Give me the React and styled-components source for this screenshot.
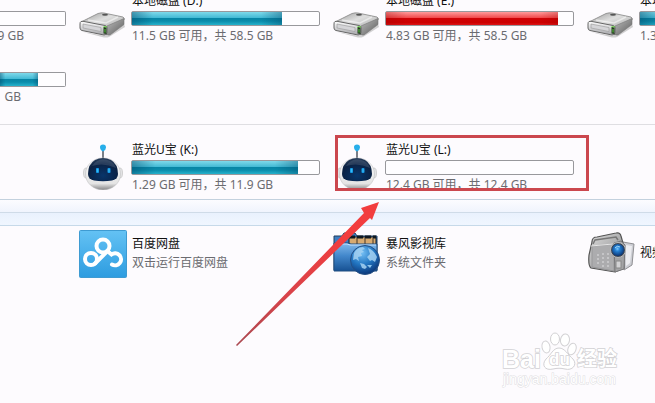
import React from "react";
import styled, { createGlobalStyle } from "styled-components";

const GlobalStyle = createGlobalStyle`
  * { box-sizing: border-box; }
  body {
    margin: 0;
    background: #fdfbfe;
    font-family: "Noto Sans", "Noto Sans CJK SC", sans-serif;
    font-size: 12px;
    line-height: 18px;
    color: #101010;
  }
`;

const Page = styled.main`
  position: relative;
  min-height: 100vh;
  overflow: hidden;
`;

const TileGrid = styled.section`
  display: grid;
  grid-template-columns: 79px 254px 254px minmax(0, 1fr);
  grid-auto-rows: 51px;
  row-gap: 10px;
`;

const DriveGrid = styled(TileGrid)`
  margin-top: -7px;
  padding-bottom: 19px;
`;

const RemovableGrid = styled(TileGrid)`
  padding: 17px 0 6px;
  border-top: 1px solid #dfdee2;
`;

const FolderGrid = styled(TileGrid)`
  padding-top: 2px;
`;

const Divider = styled.div`
  height: 14px;
  border-top: 1px solid #c3d1de;
  border-bottom: 1px solid #cfdbe8;
  background: linear-gradient(#fcfcff, #f0f4fd);
`;

const GroupBand = styled.div`
  height: 13px;
  border-bottom: 1px solid #c6d9e9;
  background: linear-gradient(#e9f1fd, #f0f6ff);
`;

const Tile = styled.article`
  position: relative;
  grid-column: ${(p) => p.$column};
  display: flex;
  gap: 4px;
  align-items: ${(p) => (p.$centered ? "center" : "stretch")};
  padding-right: 13px;
  min-width: 0;
`;

const TileIcon = styled.svg`
  flex: none;
  width: 48px;
  height: 48px;
`;

const TileText = styled.div`
  flex: 1;
  min-width: 0;
  white-space: nowrap;
  align-self: center;
`;

const DriveText = styled(TileText)`
  flex: ${(p) => (p.$cut ? "0 0 189px" : "1")};
  align-self: flex-start;
`;

const Name = styled.div`
  height: 18px;
  padding-left: 1px;
  line-height: 16px;
`;

const Detail = styled.div`
  height: 18px;
  padding-left: 1px;
  color: #6b6b70;
`;

const DriveDetail = styled(Detail)`
  line-height: 20px;
`;

const EdgeDetail = styled(DriveDetail)`
  display: flex;
  justify-content: flex-end;
  padding-right: ${(p) => p.$trail}px;
`;

const Meter = styled.div`
  height: 15px;
  border: 1px solid #98989c;
  border-left-width: ${(p) => (p.$edge ? 0 : 1)}px;
  border-radius: ${(p) => (p.$edge ? "0 2px 2px 0" : "2px")};
  background: #fefdff;
`;

const fills = {
  blue: `linear-gradient(90deg, rgba(0,70,105,.45), transparent 14%, transparent 86%, rgba(0,70,105,.4)),
    linear-gradient(#7fd9ea 0, #42b9d4 45%, #0785a5 50%, #0a8cab 70%, #25b2cc 100%)`,
  red: `linear-gradient(90deg, rgba(150,0,0,.3), transparent 12%, transparent 90%, rgba(150,0,0,.25)),
    linear-gradient(#ff9b9b 0, #f0484a 45%, #cf0205 50%, #cc0000 80%, #dc1518 100%)`,
};

const MeterFill = styled.div`
  height: 100%;
  background: ${(p) => fills[p.$tone]};
`;

const Highlight = styled.div`
  position: absolute;
  top: -7px;
  left: 2px;
  width: 254px;
  height: 56px;
  border: 3px solid #cb474e;
`;

const Arrow = styled.svg`
  position: absolute;
  left: 230px;
  top: 196px;
  width: 155px;
  height: 155px;
`;

const Watermark = styled.svg`
  position: absolute;
  left: 498px;
  top: 328px;
  width: 130px;
  height: 65px;
`;

function HardDisk() {
  return (
    <TileIcon viewBox="0 0 48 48" aria-hidden="true">
      <defs>
        <linearGradient id="diskTop" x1="0" y1="0" x2="1" y2="1">
          <stop offset="0" stopColor="#999" />
          <stop offset=".45" stopColor="#dedede" />
          <stop offset="1" stopColor="#a8a8a8" />
        </linearGradient>
        <linearGradient id="diskFront" x1="0" y1="0" x2="0" y2="1">
          <stop offset="0" stopColor="#fff" />
          <stop offset="1" stopColor="#a4a4a8" />
        </linearGradient>
        <linearGradient id="diskSide" x1="0" y1="0" x2="1" y2="1">
          <stop offset="0" stopColor="#c0c0c0" />
          <stop offset="1" stopColor="#5c5c5c" />
        </linearGradient>
      </defs>
      <path d="M4 39 L28 43 L45 31 L46 34 L30 44 Q27 45 23 44Z" fill="#999" opacity=".45" />
      <path d="M2 29 L19 20.500 Q22 19.500 25 20 L44 24 Q46 25 45 27 L29 36 Z" fill="url(#diskTop)" stroke="#858585" strokeWidth=".8" />
      <path d="M28 33 L45 25.500 L45 31.500 L31 42 L27 42Z" fill="url(#diskSide)" stroke="#777" strokeWidth=".6" />
      <path d="M2 28.500 Q1 29 1 31 L1 35 Q1 37 3 37.500 L25 42 Q28 42.500 28 39.500 L28 35 Q28 33 26 32.500 L4 28.300Z" fill="url(#diskFront)" stroke="#666" strokeWidth="1" />
      <path d="M4 31 L22 34.500 L22 38.500 L4 35Z" fill="#d5d5d8" stroke="#999" strokeWidth=".6" />
      <path d="M24.500 34 L27.500 34.500 L27.500 41 L24.500 40.500Z" fill="#253c20" />
      <path d="M24 34.500 L25.500 33.500 L28 34" stroke="#69d943" strokeWidth="1" fill="none" />
      <path d="M26 36V39.500" stroke="#58cb3d" strokeWidth="1" />
      <ellipse cx="26" cy="21.700" rx="3" ry="1" fill="#555" />
      <path d="M9 27 L27 30 L39 24" fill="none" stroke="#fff" strokeWidth="1.400" opacity=".5" />
    </TileIcon>
  );
}

function Robot() {
  return (
    <TileIcon viewBox="0 -1 48 48" aria-hidden="true">
      <defs>
        <linearGradient id="robotHead" x1="0" y1="0" x2="0" y2="1">
          <stop offset="0" stopColor="#fff" />
          <stop offset=".8" stopColor="#e4e4e4" />
          <stop offset="1" stopColor="#858587" />
        </linearGradient>
        <radialGradient id="robotFace" cx=".5" cy=".75" r=".8">
          <stop offset="0" stopColor="#08356a" />
          <stop offset=".65" stopColor="#0b2143" />
          <stop offset="1" stopColor="#30445f" />
        </radialGradient>
      </defs>
      <path d="M24 5V16" stroke="#4c5660" strokeWidth="1.500" />
      <path d="M21 4Q21 1.500 24 1.500Q27 1.500 27 4.500Q27 7 24 8.500Q21 7 21 4" fill="#27aeea" />
      <ellipse cx="7" cy="30" rx="2.500" ry="5" fill="#e4e4e6" stroke="#bbb" strokeWidth=".6" />
      <ellipse cx="41" cy="30" rx="2.500" ry="5" fill="#e4e4e6" stroke="#bbb" strokeWidth=".6" />
      <ellipse cx="24" cy="31" rx="17.500" ry="16" fill="url(#robotHead)" stroke="#bfbfc1" strokeWidth=".6" />
      <path d="M9 31Q9 21 16 17Q24 13 32 17Q39 21 39 31Q39 36 33 37.500Q24 39 15 37.500Q9 36 9 31Z" fill="url(#robotFace)" />
      <path d="M13 23Q20 13 31 18Q35 20 37 25Q25 19 13 23Z" fill="#8395a8" opacity=".25" />
      <rect x="17" y="25" width="3" height="5" rx="1" fill="#169be8" />
      <rect x="28.500" y="25" width="3" height="5" rx="1" fill="#169be8" />
      <path d="M18.500 26V29M30 26V29" stroke="#3bbcf0" strokeWidth="1" />
    </TileIcon>
  );
}

function CloudDisk() {
  return (
    <TileIcon viewBox="0 0 48 48" aria-hidden="true">
      <defs>
        <linearGradient id="cloudBack" x1="0" y1="0" x2="0" y2="1">
          <stop offset="0" stopColor="#64c2f4" />
          <stop offset="1" stopColor="#2d9ce0" />
        </linearGradient>
      </defs>
      <rect x=".5" y=".5" width="47" height="47" rx="1" fill="url(#cloudBack)" stroke="#3e9bd2" />
      <g fill="none" stroke="#fff" strokeWidth="4" strokeLinecap="round">
        <circle cx="24" cy="16" r="6.500" />
        <circle cx="12" cy="29" r="6" />
        <path d="M16 33.500L28.500 21" />
        <path d="M28.500 21L32.500 24.500A6 6 0 1 1 33 34.500" />
      </g>
    </TileIcon>
  );
}

function WebFolder() {
  return (
    <TileIcon viewBox="0 0 48 48" aria-hidden="true">
      <defs>
        <linearGradient id="folderFront" x1="0" y1="0" x2="0" y2="1">
          <stop offset="0" stopColor="#82b9eb" />
          <stop offset=".45" stopColor="#4388cc" />
          <stop offset="1" stopColor="#175193" />
        </linearGradient>
        <radialGradient id="globe" cx=".4" cy=".25" r=".8">
          <stop offset="0" stopColor="#75c0f5" />
          <stop offset=".5" stopColor="#2377c3" />
          <stop offset="1" stopColor="#082e70" />
        </radialGradient>
      </defs>
      <path d="M1 40V6H9L11 3H22L24 6H44V40Z" fill="#3e7cc0" stroke="#203d5f" />
      <path d="M16 7H43V17H16Z" fill="#d8aa70" stroke="#101e2d" />
      <path d="M16 7H43" stroke="#101820" strokeWidth="3" strokeDasharray="6 2" />
      <path d="M24 8V15M32 8V15M40 8V15" stroke="#453629" />
      <path d="M1 13H15L18 14H44V41H1Z" fill="url(#folderFront)" stroke="#204e80" />
      <path d="M2 14H14L17 15H43" stroke="#c0dfff" fill="none" />
      <circle cx="32" cy="30" r="14.500" fill="url(#globe)" stroke="#265084" strokeWidth="1" />
      <path d="M21 23Q24 17 30 17L32 19L29 20L31 22L28 23L29 26L25 27L26 31L23 29L20 30Z M35 18Q41 20 44 27L42 32L39 30L37 31L34 27L37 24Z M27 33L31 34L34 37L32 39L29 38Z" fill="#a6d2f2" opacity=".85" />
      <path d="M34 35L39 35L37 38" fill="#8fc5ec" />
    </TileIcon>
  );
}

function Camera() {
  return (
    <TileIcon viewBox="0 0 48 48" aria-hidden="true">
      <defs>
        <linearGradient id="cameraBody" x1="0" y1="0" x2="1" y2="1">
          <stop offset="0" stopColor="#dcdcdc" />
          <stop offset="1" stopColor="#828284" />
        </linearGradient>
        <radialGradient id="lens" cx=".45" cy=".4" r=".65">
          <stop offset="0" stopColor="#7cc8ff" />
          <stop offset=".3" stopColor="#2582d5" />
          <stop offset="1" stopColor="#082b68" />
        </radialGradient>
      </defs>
      <path d="M36 12L47 14L45 35L37 40Z" fill="#cdced4" stroke="#8f8f93" />
      <path d="M39 15L45 16L43 33L39 36Z" fill="#ececf0" />
      <path d="M5 12Q5 7 10 7L29 3Q33 2 34 6L36 13L37 38L28 42L4 38Q1 36 2 25Z" fill="url(#cameraBody)" stroke="#555" strokeWidth="1.200" />
      <path d="M6 14L8 10L29 7L31 10" fill="none" stroke="#777" strokeWidth="1.500" />
      <path d="M5 16L27 14L27 41L5 37Z" fill="#acacae" stroke="#98989a" />
      <path d="M4 16L26 14" stroke="#fff" opacity=".75" />
      <path d="M11 24V36M16 23V37M21 23V38" stroke="#cdcdcf" strokeWidth="1.500" strokeDasharray="2 2" />
      <path d="M27 13L34 11L38 15L37 39L28 42Z" fill="#a3a3a5" stroke="#78787a" />
      <circle cx="31" cy="20" r="7.500" fill="#3c4655" stroke="#bbb" />
      <circle cx="31" cy="20" r="6" fill="url(#lens)" />
      <path d="M28 18Q30 15 33 17" stroke="#a6d9f8" fill="none" />
      <rect x="29" y="31" width="5" height="7" fill="#d2d2d4" stroke="#888" />
    </TileIcon>
  );
}

function Capacity({ name, value, tone = "blue", edge }) {
  return (
    <Meter role="meter" aria-label={name} aria-valuemin={0} aria-valuemax={100} aria-valuenow={value} $edge={edge}>
      <MeterFill $tone={tone} style={{ width: `${value}%` }} />
    </Meter>
  );
}

function Drive({ column, icon, name, value, tone, detail, cut, children }) {
  return (
    <Tile $column={column}>
      {icon}
      <DriveText $cut={cut}>
        <Name>{name}</Name>
        <Capacity name={name} value={value} tone={tone} />
        <DriveDetail>{detail}</DriveDetail>
      </DriveText>
      {children}
    </Tile>
  );
}

function EdgeDrive({ value, detail, trail }) {
  return (
    <Tile $column={1}>
      <DriveText>
        <Name />
        <Capacity name={detail} value={value} edge />
        <EdgeDetail $trail={trail}>{detail}</EdgeDetail>
      </DriveText>
    </Tile>
  );
}

function Folder({ column, icon, name, detail }) {
  return (
    <Tile $column={column} $centered>
      {icon}
      <TileText>
        <Name>{name}</Name>
        {detail && <Detail>{detail}</Detail>}
      </TileText>
    </Tile>
  );
}

export default function App() {
  return (
    <>
      <GlobalStyle />
      <Page>
        <DriveGrid>
          <EdgeDrive value={0} detail="9 GB" trail={42} />
          <Drive column={2} icon={<HardDisk />} name="本地磁盘 (D:)" value={80} detail="11.5 GB 可用，共 58.5 GB" />
          <Drive column={3} icon={<HardDisk />} name="本地磁盘 (E:)" value={92} tone="red" detail="4.83 GB 可用，共 58.5 GB" />
          <Drive column={4} icon={<HardDisk />} name="本地" value={80} detail="1.3" cut />
          <EdgeDrive value={59} detail="GB" trail={45} />
        </DriveGrid>
        <RemovableGrid>
          <Drive column={2} icon={<Robot />} name="蓝光U宝 (K:)" value={89} detail="1.29 GB 可用，共 11.9 GB" />
          <Drive column={3} icon={<Robot />} name="蓝光U宝 (L:)" value={0} detail="12.4 GB 可用，共 12.4 GB">
            <Highlight />
          </Drive>
        </RemovableGrid>
        <Divider />
        <GroupBand />
        <FolderGrid>
          <Folder column={2} icon={<CloudDisk />} name="百度网盘" detail="双击运行百度网盘" />
          <Folder column={3} icon={<WebFolder />} name="暴风影视库" detail="系统文件夹" />
          <Folder column={4} icon={<Camera />} name="视频" />
        </FolderGrid>
        <Arrow viewBox="230 196 155 155" aria-hidden="true">
          <defs>
            <linearGradient id="arrowFill" x1="0" y1="1" x2="1" y2="0">
              <stop offset="0" stopColor="#a94850" />
              <stop offset=".35" stopColor="#d8434a" />
              <stop offset=".75" stopColor="#f23d3e" />
              <stop offset="1" stopColor="#f23d3e" />
            </linearGradient>
          </defs>
          <path d="M236 345L364 213L361 208L379 202L372 220L370 218L237 346Z" fill="url(#arrowFill)" />
        </Arrow>
        <Watermark viewBox="498 328 130 65" role="img" aria-label="Baidu 经验">
          <g fill="#fff" stroke="#d2d1d4" strokeWidth="1">
            <ellipse cx="546" cy="347" rx="4" ry="6" transform="rotate(-12 546 347)" />
            <ellipse cx="555" cy="339" rx="4.500" ry="6" />
            <ellipse cx="565" cy="340" rx="4.500" ry="6" transform="rotate(8 565 340)" />
            <ellipse cx="572" cy="349" rx="4" ry="6" transform="rotate(20 572 349)" />
            <path d="M559 348C565 348 568 355 573 359C578 365 572 371 565 369C561 368 557 368 553 369C545 371 541 365 546 359C551 355 553 348 559 348Z" />
            <g fontFamily="Liberation Sans, sans-serif" fontWeight="700" paintOrder="stroke" strokeWidth="1.500">
              <text x="502" y="368" fontSize="25">Bai</text>
              <text x="549" y="365" fontSize="17">du</text>
              <text x="577" y="366" fontSize="20" fontFamily="Noto Sans CJK SC, sans-serif">经验</text>
            </g>
            <text x="503" y="384" fontSize="14" fontFamily="Liberation Sans, sans-serif" paintOrder="stroke" stroke="#dedde1">jingyan.baidu.com</text>
          </g>
        </Watermark>
      </Page>
    </>
  );
}
